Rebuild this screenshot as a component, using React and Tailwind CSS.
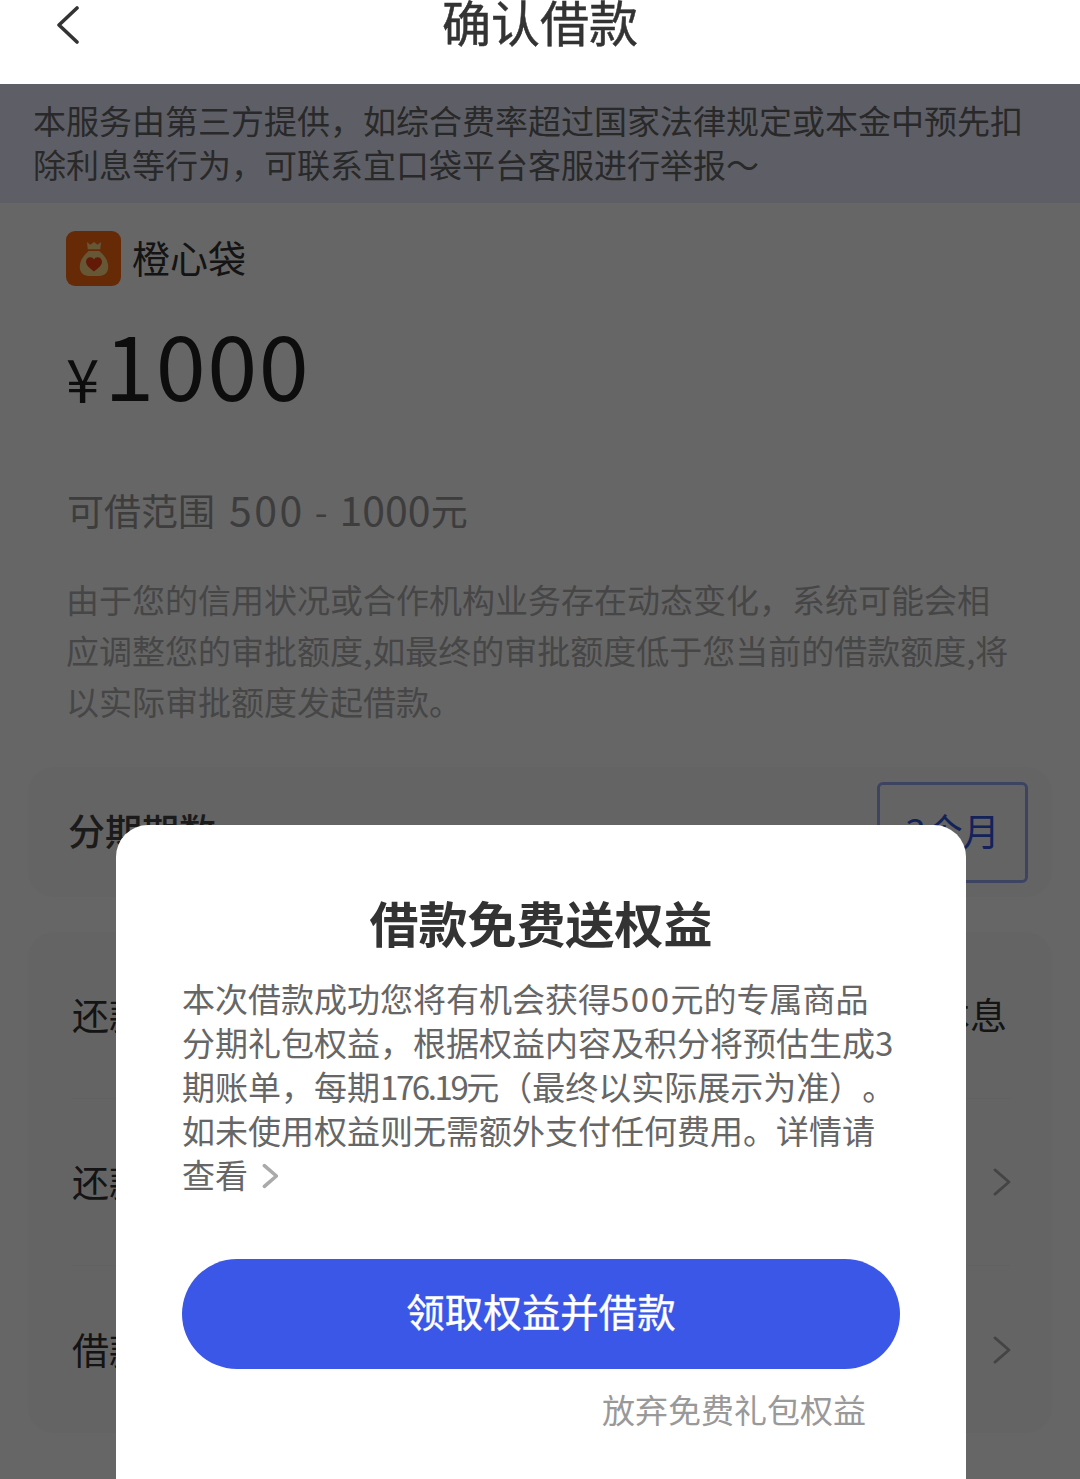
import React from "react";

const ChevronRight = ({ className, stroke = 3 }) => (
  <svg className={className} viewBox="0 0 20 30" fill="none" stroke="currentColor" strokeWidth={stroke} strokeLinecap="round" strokeLinejoin="round">
    <path d="M3 2 L18 15 L3 28" />
  </svg>
);

const BagIcon = () => (
  <div className="flex h-[55px] w-[55px] items-center justify-center rounded-[9px] bg-[#ff6a12]">
    <svg width="32" height="36" viewBox="0 0 36 40">
      <path d="M10 1 L14 4 L18 1 L22 4 L26 1 L25 9 H11 Z" fill="#ffd98a" />
      <path d="M12 11 H24 C30 16 34 22 34 29 C34 36 29 39 24 39 H12 C7 39 2 36 2 29 C2 22 6 16 12 11 Z" fill="#ffd98a" />
      <path d="M18 34 C13 30 9 27 9 23 C9 20 11 18 14 18 C16 18 17 19 18 20.5 C19 19 20 18 22 18 C25 18 27 20 27 23 C27 27 23 30 18 34 Z" fill="#f5410f" />
    </svg>
  </div>
);

const Row = ({ label, right, arrow, last }) => (
  <div className={`flex h-[167px] items-center justify-between ${last ? "" : "border-b border-[#f3f3f3]"}`}>
    <span className="text-[37px] text-[#333]">{label}</span>
    {right && <span className="mr-[4px] text-[37px] text-[#333]">{right}</span>}
    {arrow && <ChevronRight className="h-[28px] w-[19px] text-[#aaa]" />}
  </div>
);

export default function App() {
  return (
    <div className="relative h-[1479px] w-[1080px] overflow-hidden bg-white font-['Noto_Sans_CJK_SC','Noto_Sans',sans-serif] [text-spacing-trim:space-all]">
      <header className="relative flex h-[84px] justify-center bg-white">
        <svg className="absolute left-[56px] top-[6px] h-[38px] w-[23px] text-[#333]" viewBox="0 0 23 38" fill="none" stroke="currentColor" strokeWidth="3.6" strokeLinecap="round" strokeLinejoin="round">
          <path d="M21 2 L3 19 L21 36" />
        </svg>
        <h1 className="-mt-[4px] text-[49px] leading-[49px] font-normal text-[#333] [-webkit-text-stroke:0.5px_#333]">确认借款</h1>
      </header>

      <div className="h-[119px] bg-[#ebeeff] px-[33px] pt-[14px] text-[33px] leading-[44px] text-[#666]">
        <div className="whitespace-nowrap">本服务由第三方提供，如综合费率超过国家法律规定或本金中预先扣</div>
        <div className="whitespace-nowrap">除利息等行为，可联系宜口袋平台客服进行举报～</div>
      </div>

      <main className="px-[66px] pt-[26px]">
        <div className="flex items-center gap-[11px]">
          <BagIcon />
          <span className="pb-[4px] text-[38px] leading-[55px] text-[#333]">橙心袋</span>
        </div>
        <div className="mt-[14px] flex h-[120px] items-end">
          <span className="mb-[15px] text-[60px] leading-[60px] text-[#222]">¥</span>
          <span className="ml-[5px] text-[90px] leading-[120px] tracking-[1.5px] text-[#222]">1000</span>
        </div>
        <div className="mt-[59px] flex items-baseline pl-[1px] text-[37px] leading-[54px] text-[#999]">
          可借范围
          <span className="ml-[14px] text-[41px] tracking-[2.5px]">500</span>
          <span className="ml-[10px] text-[37px]">-</span>
          <span className="ml-[12px] text-[41px]">1000</span>
          元
        </div>
        <div className="mt-[37px] text-[33px] leading-[51px] text-[#b0b0b0]">
          <div className="whitespace-nowrap">由于您的信用状况或合作机构业务存在动态变化，系统可能会相</div>
          <div className="whitespace-nowrap">应调整您的审批额度,如最终的审批额度低于您当前的借款额度,将</div>
          <div className="whitespace-nowrap">以实际审批额度发起借款。</div>
        </div>
      </main>

      <section className="mx-[28px] mt-[40px] flex h-[130px] items-center justify-between rounded-[26px] bg-[#fafafa] pl-[40px] pr-[24px]">
        <span className="pb-[2px] text-[37px] font-medium text-[#444]">分期期数</span>
        <span className="flex h-[101px] w-[151px] items-center justify-center rounded-[6px] border-[3px] border-[#9aaaf5] pb-[2px] text-[37px] text-[#3455e0]">3个月</span>
      </section>

      <section className="mx-[28px] mt-[35px] rounded-[26px] bg-[#fafafa] pl-[44px] pr-[41px]">
        <Row label="还款方式" right="等额本息" />
        <Row label="还款计划" arrow />
        <Row label="借款用途" arrow last />
      </section>

      <div className="absolute inset-x-0 bottom-0 top-[84px] bg-black/60" />

      <div className="absolute left-[116px] top-[825px] h-[700px] w-[850px] rounded-[32px] bg-white px-[66px]">
        <h2 className="mt-[67px] text-center text-[49px] leading-[60px] font-bold text-[#333]">借款免费送权益</h2>
        <div className="mt-[24px] text-[33px] leading-[44px] text-[#666]">
          <div className="whitespace-nowrap">本次借款成功您将有机会获得<span className="tracking-[1.5px]">500</span>元的专属商品</div>
          <div className="whitespace-nowrap">分期礼包权益，根据权益内容及积分将预估生成3</div>
          <div className="whitespace-nowrap">期账单，每期<span className="tracking-[-2.4px]">176.19</span>元（最终以实际展示为准）。</div>
          <div className="whitespace-nowrap">如未使用权益则无需额外支付任何费用。详情请</div>
          <div className="flex items-center gap-[14px] whitespace-nowrap">
            查看
            <ChevronRight className="mt-[3px] h-[26px] w-[16px] text-[#aaa]" stroke={4.5} />
          </div>
        </div>
        <button className="mt-[63px] flex h-[110px] w-[718px] items-center justify-center rounded-[55px] bg-[#3b57e8] pb-[6px] text-[38.5px] text-white [-webkit-text-stroke:0.4px_#fff]">
          领取权益并借款
        </button>
        <div className="mt-[16px] pr-[34px] text-right text-[33px] leading-[48px] text-[#999]">放弃免费礼包权益</div>
      </div>
    </div>
  );
}
